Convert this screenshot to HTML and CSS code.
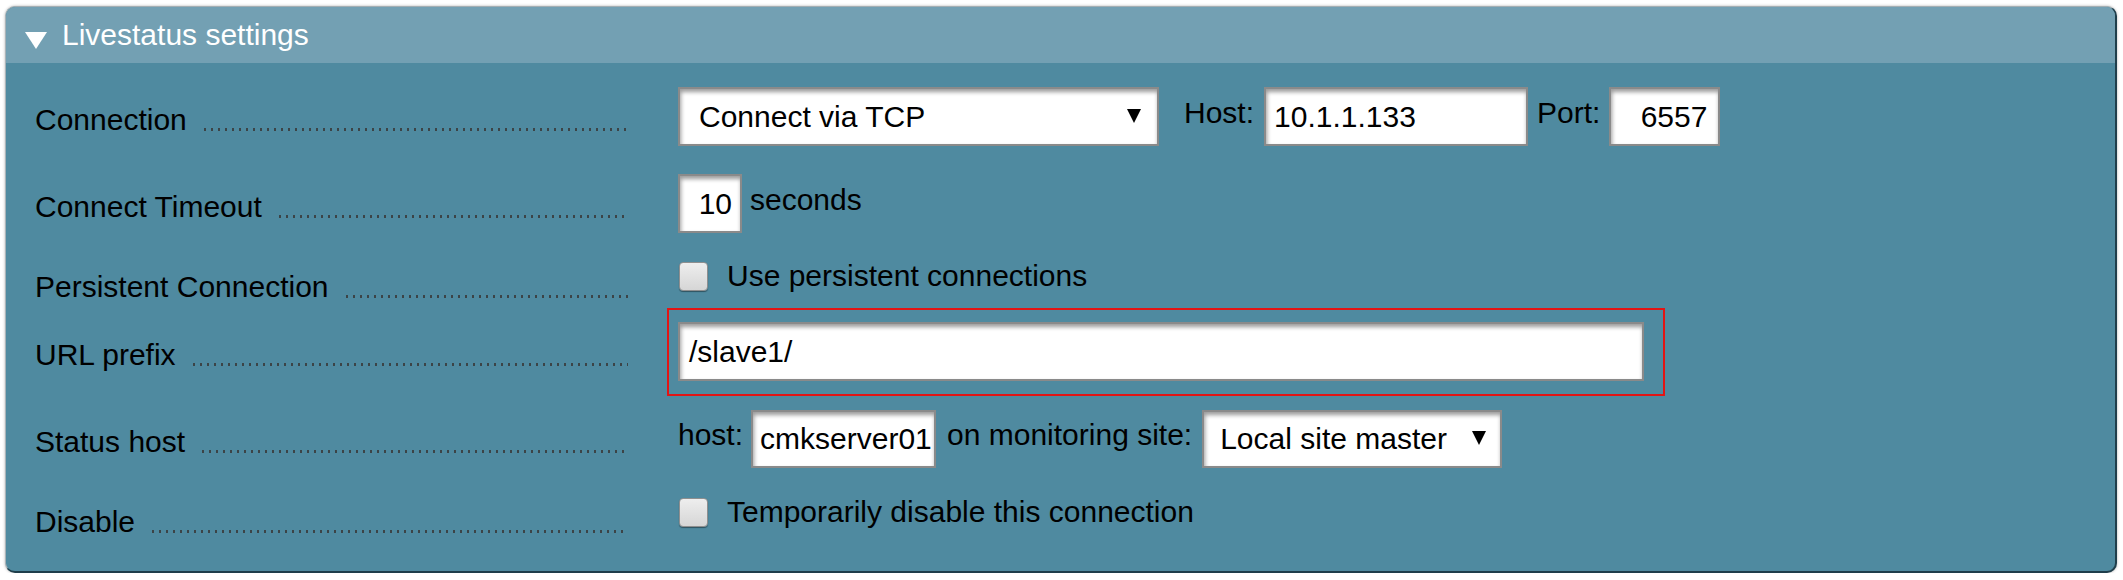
FILE: index.html
```html
<!DOCTYPE html>
<html>
<head>
<meta charset="utf-8">
<link rel="stylesheet" href="styles.css">
</head>
<body>
<div class="panel">
  <div class="panel-head">
    <svg class="caret" width="22" height="17" viewBox="0 0 22 17"><polygon points="0,0 22,0 11,17" fill="#fff"/></svg>
    <span class="panel-title">Livestatus settings</span>
  </div>
  <div class="panel-body">
    <div class="row r-conn">
      <div class="legend pad16"><span class="title">Connection</span><span class="dots"></span></div>
      <div class="content">
        <div class="field select sel-conn"><span class="val">Connect via TCP</span><svg class="arrow" width="14" height="14" viewBox="0 0 14 14"><polygon points="0,0 14,0 7,14" fill="#000"/></svg></div>
        <span class="side host-lbl">Host:</span>
        <div class="field in-host">10.1.1.133</div>
        <span class="side port-lbl">Port:</span>
        <div class="field in-port">6557</div>
      </div>
    </div>
    <div class="row r-timeout">
      <div class="legend pad16"><span class="title">Connect Timeout</span><span class="dots"></span></div>
      <div class="content">
        <div class="field in-timeout">10</div>
        <span class="side sec-lbl">seconds</span>
      </div>
    </div>
    <div class="row r-persist">
      <div class="legend pad11"><span class="title">Persistent Connection</span><span class="dots"></span></div>
      <div class="content line">
        <span class="checkbox"></span>
        <span class="cb-text">Use persistent connections</span>
      </div>
    </div>
    <div class="row r-url">
      <div class="legend pad30"><span class="title">URL prefix</span><span class="dots"></span></div>
      <div class="content">
        <div class="highlight">
          <div class="field in-url">/slave1/</div>
        </div>
      </div>
    </div>
    <div class="row r-status">
      <div class="legend pad15"><span class="title">Status host</span><span class="dots"></span></div>
      <div class="content">
        <span class="side statushost-lbl">host:</span>
        <div class="field in-statushost">cmkserver01</div>
        <span class="side site-lbl">on monitoring site:</span>
        <div class="field select sel-site"><span class="val">Local site master</span><svg class="arrow" width="14" height="14" viewBox="0 0 14 14"><polygon points="0,0 14,0 7,14" fill="#000"/></svg></div>
      </div>
    </div>
    <div class="row r-disable">
      <div class="legend pad10"><span class="title">Disable</span><span class="dots"></span></div>
      <div class="content line">
        <span class="checkbox"></span>
        <span class="cb-text">Temporarily disable this connection</span>
      </div>
    </div>
  </div>
</div>
</body>
</html>
```
FILE: styles.css
```css
html, body {
  margin: 0;
  padding: 0;
  background: #ffffff;
}

body {
  font-family: "Liberation Sans", Arial, sans-serif;
  font-size: 30px;
  line-height: 34px;
  color: #000;
}

.panel {
  margin: 6px 6px 0 5px;
  border-top: 1px solid #a3aeb3;
  border-left: 1px solid #a9b3b8;
  border-right: 2px solid #1f3e4b;
  border-bottom: 2px solid #1f3e4b;
  border-radius: 10px;
  background: #4f8aa0;
  box-shadow: 0 0 3px rgba(0, 0, 0, 0.3);
  overflow: hidden;
}

.panel-head {
  height: 56px;
  background: #73a0b3;
  display: flex;
  align-items: center;
  padding-left: 19px;
  color: #fff;
}

.caret {
  margin-top: 10px;
  flex: none;
}

.panel-title {
  margin-left: 15px;
  line-height: 56px;
}

.panel-body {
  padding: 24px 0 32px 0;
}

.row {
  display: flex;
  align-items: flex-start;
}

.r-timeout { margin-top: 28px; }
.r-persist { margin-top: 26px; }
.r-url { margin-top: 4px; }
.r-status { margin-top: 14px; }
.r-disable { margin-top: 27px; }

.legend {
  box-sizing: border-box;
  width: 672px;
  flex: none;
  display: flex;
  padding-left: 29px;
  padding-right: 50px;
}

.pad16 { padding-top: 16px; }
.pad11 { padding-top: 11px; }
.pad30 { padding-top: 30px; }
.pad15 { padding-top: 15px; }
.pad10 { padding-top: 10px; }

.title {
  white-space: nowrap;
  flex: none;
}

.dots {
  flex: 1;
  height: 34px;
  margin-left: 17px;
  background-image: linear-gradient(to right, #3c4447 2px, transparent 2px);
  background-size: 7px 3px;
  background-repeat: repeat-x;
  background-position: left 0 top 25px;
}

.content {
  display: flex;
  align-items: center;
}

.content.line {
  height: 34px;
}

.field {
  box-sizing: border-box;
  height: 59px;
  background: #fff;
  border: 2px solid #8a8a8a;
  box-shadow: inset 1px 3px 4px rgba(0, 0, 0, 0.4);
  display: flex;
  align-items: center;
  white-space: nowrap;
  overflow: hidden;
}

.select {
  justify-content: space-between;
}

.sel-conn {
  width: 481px;
  padding: 0 16px 0 19px;
  margin-right: 25px;
}

.sel-site {
  width: 300px;
  height: 58px;
  padding: 0 14px 0 16px;
}

.arrow {
  flex: none;
  margin-top: -2px;
}

.side {
  padding-bottom: 8px;
  white-space: nowrap;
}

.host-lbl { margin-right: 10px; }
.port-lbl { margin-right: 9px; }

.in-host {
  width: 264px;
  padding-left: 8px;
  margin-right: 9px;
}

.in-port {
  width: 111px;
  justify-content: flex-end;
  padding-right: 11px;
}

.in-timeout {
  width: 64px;
  justify-content: flex-end;
  padding-right: 8px;
}

.sec-lbl {
  margin-left: 8px;
}

.checkbox {
  box-sizing: border-box;
  width: 29px;
  height: 29px;
  flex: none;
  margin-left: 1px;
  border: 1px solid #8f8f8f;
  border-radius: 4px;
  background: linear-gradient(#eeeeee, #d6d6d6);
  box-shadow: 0 1px 1px rgba(0, 0, 0, 0.4);
}

.cb-text {
  margin-left: 19px;
  white-space: nowrap;
}

.highlight {
  margin-left: -11px;
  border: 2px solid #e31414;
  padding: 12px 19px 13px 9px;
}

.in-url {
  width: 966px;
  padding-left: 9px;
}

.statushost-lbl { margin-right: 8px; }

.in-statushost {
  width: 185px;
  height: 58px;
  padding-left: 7px;
  margin-right: 11px;
}

.site-lbl { margin-right: 10px; }
```
